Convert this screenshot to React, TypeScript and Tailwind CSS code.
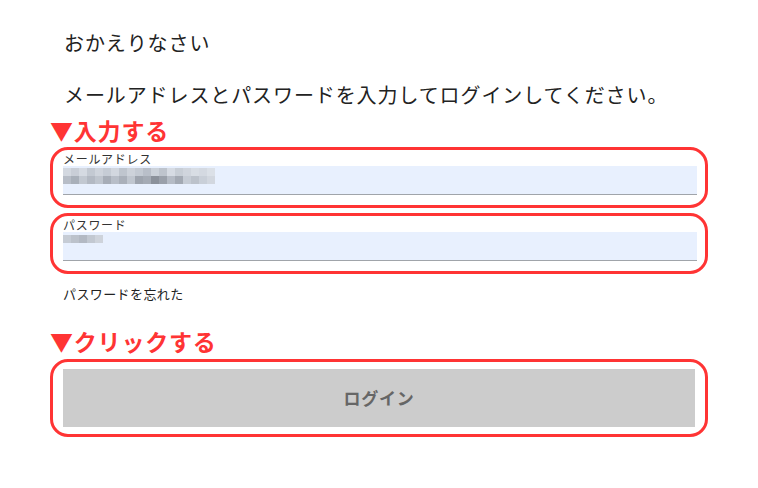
const emailMosaic = [
  ["#d3d8e0", "#c9ced7", "#d5dae2", "#c3c9d2", "#cfd4dc", "#c6ccd5", "#d2d7df", "#bfc5ce", "#cdd2da", "#c4cad3", "#b9bfc9", "#cbd1d9", "#bec4cd", "#d6dbe3", "#c8ced6", "#d0d5dd", "#d8dde4", "#d4d9e1", "#dbe0e7"],
  ["#b7bdc7", "#a9b0ba", "#c2c8d1", "#b3b9c3", "#bfc5ce", "#a7adb7", "#b8bec8", "#aab0ba", "#c0c6cf", "#9ea4ae", "#a5abb5", "#8b919b", "#9aa0aa", "#b5bbc5", "#a3a9b3", "#c6ccd5", "#bcc2cb", "#c9cfd8", "#d2d7df"],
];

const passwordMosaic = ["#c6ccd5", "#bcc2cb", "#b3b9c3", "#c2c8d1", "#ced3db"];

function Mosaic({ rows }: { rows: string[][] }) {
  return (
    <div className="flex flex-col">
      {rows.map((row, i) => (
        <div key={i} className="flex">
          {row.map((c, j) => (
            <div key={j} className="w-[8px] h-[8px]" style={{ backgroundColor: c }} />
          ))}
        </div>
      ))}
    </div>
  );
}

function Field({ label, children }: { label: string; children: React.ReactNode }) {
  return (
    <div className="border-[3px] border-[#ff3434] rounded-[18px] pl-[10px] pr-[8px] pt-[2px] pb-[10px]">
      <div className="text-[12px] leading-[14px] tracking-[0.7px] text-[#333]">{label}</div>
      <div className="h-[29px] bg-[#e8f0fe] border-b border-[#a0a4aa] pt-[2px]">{children}</div>
    </div>
  );
}

export default function App() {
  return (
    <div
      className="w-[758px] h-[488px] bg-white overflow-hidden"
      style={{ fontFamily: '"Noto Sans CJK JP", "Noto Sans", sans-serif' }}
    >
      <div className="w-[708px] pl-[50px] flex flex-col">
        <p className="mt-[28px] ml-[14px] text-[20px] leading-[30px] tracking-[0.9px] text-[#222]">
          おかえりなさい
        </p>
        <p className="mt-[22px] ml-[14px] text-[20px] leading-[30px] tracking-[0.9px] text-[#222]">
          メールアドレスとパスワードを入力してログインしてください。
        </p>

        {/* annotation */}
        <div className="mt-[5px] text-[23px] leading-[30px] font-bold tracking-[0.8px] text-[#ff3434]">
          ▼入力する
        </div>

        <div className="mt-[2px] flex flex-col gap-[5px]">
          <Field label="メールアドレス">
            <Mosaic rows={emailMosaic} />
          </Field>
          <Field label="パスワード">
            <div className="pt-[1px]">
              <Mosaic rows={[passwordMosaic]} />
            </div>
          </Field>
        </div>

        <p className="mt-[10px] ml-[13px] text-[13px] leading-[20px] tracking-[0.4px] text-[#222]">
          パスワードを忘れた
        </p>

        <div className="mt-[22px] text-[23px] leading-[30px] font-bold tracking-[0.8px] text-[#ff3434]">
          ▼クリックする
        </div>

        <div className="mt-[3px] border-[3px] border-[#ff3434] rounded-[18px] pl-[10px] pr-[10px] pt-[7px] pb-[7px]">
          <button className="w-full h-[58px] bg-[#cccccc] text-[#666] text-[17px] font-bold tracking-[0.8px] flex items-center justify-center">
            ログイン
          </button>
        </div>
      </div>
    </div>
  );
}
